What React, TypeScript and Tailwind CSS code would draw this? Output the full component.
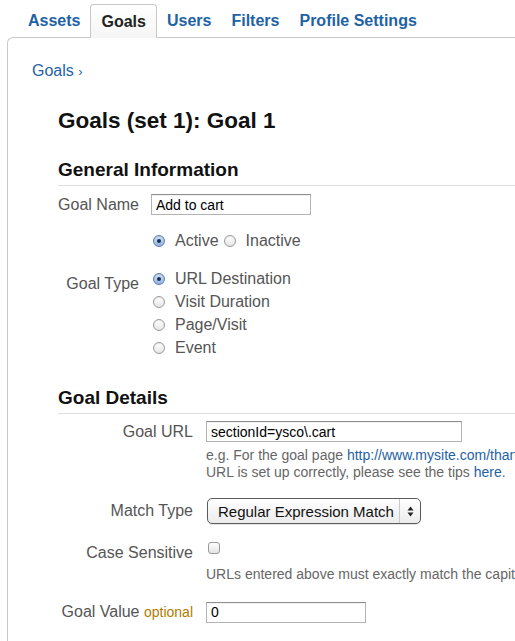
import React from "react";

const Radio = ({ checked }: { checked?: boolean }) =>
  checked ? (
    <span className="relative inline-flex h-[12px] w-[12px] shrink-0 items-center justify-center rounded-full border border-[#5d7fb3] bg-gradient-to-b from-[#d9e7f8] to-[#8db2e2] shadow-[inset_0_1px_1px_rgba(0,0,0,0.15)]">
      <span className="h-[4px] w-[4px] rounded-full bg-[#1b2f52]" />
    </span>
  ) : (
    <span className="inline-block h-[12px] w-[12px] shrink-0 rounded-full border border-[#9a9a9a] bg-gradient-to-b from-[#ffffff] to-[#e6e6e6] shadow-[inset_0_1px_1px_rgba(0,0,0,0.08)]" />
  );

const RadioItem = ({ label, checked }: { label: string; checked?: boolean }) => (
  <div className="flex h-[23px] items-center">
    <span className="ml-[2px] mr-[10px] flex items-center">
      <Radio checked={checked} />
    </span>
    <span className="text-[16px] leading-[23px] text-[#555]">{label}</span>
  </div>
);

const TextInput = ({ value, w, h }: { value: string; w: string; h: string }) => (
  <div
    className={`${w} ${h} flex shrink-0 items-center border border-[#b3b3b3] border-t-[#8e8e8e] bg-white pl-[4px] text-[14px] leading-none text-black shadow-[inset_0_1px_1px_rgba(0,0,0,0.06)]`}
  >
    {value}
  </div>
);

export default function App() {
  const tabs = ["Assets", "Goals", "Users", "Filters", "Profile Settings"];
  return (
    <div
      className="h-[641px] w-[515px] overflow-hidden bg-white"
      style={{ fontFamily: '"Liberation Sans", Arial, Helvetica, sans-serif' }}
    >
      {/* Tabs */}
      <div className="flex items-end pl-[18px] pt-[4px]">
        {tabs.map((t) =>
          t === "Goals" ? (
            <div
              key={t}
              className="relative z-10 -mb-px flex h-[34px] items-center rounded-t-[4px] border border-b-0 border-[#c8c8c8] bg-gradient-to-b from-white to-[#f5f5f5] px-[10px] text-[16px] font-bold leading-none text-[#222]"
            >
              {t}
            </div>
          ) : (
            <div
              key={t}
              className="-mb-px flex h-[34px] items-center px-[10px] text-[16px] font-bold leading-none text-[#1e62a5]"
            >
              {t}
            </div>
          )
        )}
      </div>

      {/* Panel */}
      <div className="ml-[7px] h-[700px] rounded-tl-[6px] border-l border-t border-[#c8c8c8]">
        <div className="pl-[24px] pt-[23px] text-[16px] leading-[20px] text-[#1e62a5]">
          Goals <span className="text-[13px] text-[#1e62a5]">›</span>
        </div>

        <div className="pl-[50px]">
          <h1 className="mt-[26px] text-[22.5px] font-bold leading-[26px] text-[#111]">
            Goals (set 1): Goal 1
          </h1>

          {/* General Information */}
          <h2 className="mt-[25px] border-b border-[#dedede] pb-[4px] text-[19px] font-bold leading-[22px] text-[#111]">
            General Information
          </h2>

          <div className="mt-[8px] flex items-center gap-[12px]">
            <div className="w-[81px] shrink-0 whitespace-nowrap text-right text-[16px] leading-[21px] text-[#555]">
              Goal Name
            </div>
            <TextInput value="Add to cart" w="w-[160px]" h="h-[21px]" />
          </div>

          <div className="mt-[16px] flex items-center gap-[12px]">
            <div className="w-[81px] shrink-0" />
            <div className="flex h-[20px] items-center">
              <span className="ml-[2px] mr-[10px] flex items-center">
                <Radio checked />
              </span>
              <span className="text-[16px] text-[#555]">Active</span>
              <span className="ml-[5px] mr-[10px] flex items-center">
                <Radio />
              </span>
              <span className="text-[16px] text-[#555]">Inactive</span>
            </div>
          </div>

          <div className="mt-[16px] flex items-start gap-[12px]">
            <div className="w-[81px] shrink-0 whitespace-nowrap pt-[5px] text-right text-[16px] leading-[23px] text-[#555]">
              Goal Type
            </div>
            <div className="flex flex-col">
              <RadioItem label="URL Destination" checked />
              <RadioItem label="Visit Duration" />
              <RadioItem label="Page/Visit" />
              <RadioItem label="Event" />
            </div>
          </div>

          {/* Goal Details */}
          <h2 className="mt-[28px] border-b border-[#dedede] pb-[4px] text-[19px] font-bold leading-[22px] text-[#111]">
            Goal Details
          </h2>

          <div className="mt-[7px] flex items-start gap-[13px]">
            <div className="w-[135px] shrink-0 whitespace-nowrap text-right text-[16px] leading-[21px] text-[#555]">
              Goal URL
            </div>
            <div className="flex min-w-0 flex-col">
              <TextInput value="sectionId=ysco\.cart" w="w-[256px]" h="h-[21px]" />
              <div className="mt-[5px] whitespace-nowrap text-[14px] leading-[17px] text-[#666]">
                e.g. For the goal page{" "}
                <span className="text-[#1e62a5]">http://www.mysite.com/thankyou.html</span>
                <br />
                URL is set up correctly, please see the tips <span className="text-[#1e62a5]">here</span>.
              </div>
            </div>
          </div>

          <div className="mt-[17px] flex items-center gap-[13px]">
            <div className="w-[135px] shrink-0 whitespace-nowrap text-right text-[16px] leading-[26px] text-[#555]">
              Match Type
            </div>
            <div className="ml-[1px] flex h-[26px] w-[214px] shrink-0 items-center rounded-[5px] border border-[#5c5c5c] bg-gradient-to-b from-white to-[#ececec] shadow-[0_1px_1px_rgba(0,0,0,0.12)]">
              <span className="flex-1 whitespace-nowrap pl-[10px] text-[15px] leading-none text-[#111]">
                Regular Expression Match
              </span>
              <span className="h-[24px] border-l border-[#c9c9c9]" />
              <span className="flex w-[20px] items-center justify-center">
                <svg width="7" height="11" viewBox="0 0 7 11">
                  <path d="M3.5 0.5 L6.5 4.5 L0.5 4.5 Z" fill="#222" />
                  <path d="M3.5 10.5 L6.5 6.5 L0.5 6.5 Z" fill="#222" />
                </svg>
              </span>
            </div>
          </div>

          <div className="mt-[18px] flex items-start gap-[13px]">
            <div className="w-[135px] shrink-0 whitespace-nowrap text-right text-[16px] leading-[22px] text-[#555]">
              Case Sensitive
            </div>
            <div className="flex min-w-0 flex-col">
              <span className="ml-[2px] h-[12px] w-[12px] rounded-[3px] border border-[#9a9a9a] bg-gradient-to-b from-white to-[#e4e4e4]" />
              <div className="mt-[12px] whitespace-nowrap text-[14px] leading-[17px] text-[#666]">
                URLs entered above must exactly match the capitalization
              </div>
            </div>
          </div>

          <div className="mt-[18px] flex items-center gap-[13px]">
            <div className="w-[135px] shrink-0 whitespace-nowrap text-right text-[16px] leading-[21px] text-[#555]">
              Goal Value <span className="text-[14px] text-[#b07b00]">optional</span>
            </div>
            <TextInput value="0" w="w-[160px]" h="h-[21px]" />
          </div>
        </div>
      </div>
    </div>
  );
}
